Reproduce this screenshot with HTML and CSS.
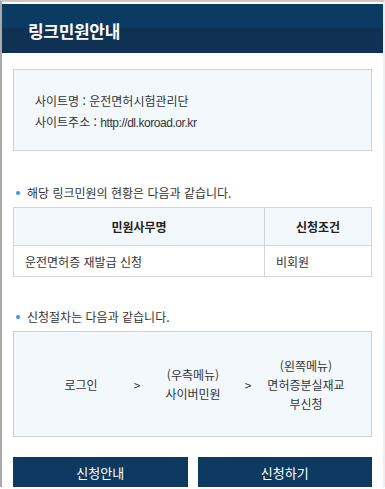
FILE: index.html
```html
<!DOCTYPE html>
<html lang="ko">

<head>
    <meta charset="UTF-8">
    <meta name="viewport" content="width=device-width, initial-scale=1.0">
    <title>링크민원안내</title>
    <link rel="stylesheet" href="styles.css">
</head>

<body>
    <div class="frame">
        <div class="header">
            <h1>링크민원안내</h1>
        </div>

        <div class="content">
            <div class="site-info">
                <p>사이트명 : 운전면허시험관리단</p>
                <p>사이트주소 : <span class="url">http://dl.koroad.or.kr</span></p>
            </div>

            <p class="bullet">해당 링크민원의 현황은 다음과 같습니다.</p>
            <table class="status">
                <thead>
                    <tr>
                        <th class="col-name">민원사무명</th>
                        <th>신청조건</th>
                    </tr>
                </thead>
                <tbody>
                    <tr>
                        <td>운전면허증 재발급 신청</td>
                        <td>비회원</td>
                    </tr>
                </tbody>
            </table>

            <p class="bullet second">신청절차는 다음과 같습니다.</p>
            <div class="steps">
                <div class="step">로그인</div>
                <div class="arrow">&gt;</div>
                <div class="step">(우측메뉴)<br>사이버민원</div>
                <div class="arrow">&gt;</div>
                <div class="step">(왼쪽메뉴)<br>면허증분실재교<br>부신청</div>
            </div>

            <div class="buttons">
                <button type="button" class="btn">신청안내</button>
                <button type="button" class="btn">신청하기</button>
            </div>
        </div>
    </div>
</body>

</html>
```

FILE: styles.css
```css
body {
    margin: 0;
    font-family: "Noto Sans CJK KR", "Noto Sans", sans-serif;
    font-size: 12px;
    color: #333;
    background: #fff;
}

.frame {
    height: 487px;
    border-top: 2px solid #c9c9c9;
    border-left: 2px solid #a9a9a9;
    border-right: 2px solid #efefef;
    padding-top: 2px;
    box-sizing: border-box;
}

.header {
    height: 49px;
    padding: 3px 0 0 26px;
    box-sizing: border-box;
    display: flex;
    align-items: center;
    background: linear-gradient(#0b3a63 0, #0b3a63 49%, #0e3154 49%, #0e3154 100%);
}

.header h1 {
    margin: 0;
    font-size: 17px;
    font-weight: bold;
    color: #fff;
    letter-spacing: -0.3px;
}

.content {
    padding: 0 11px;
}

.site-info {
    margin-top: 16px;
    padding: 20px 21px 16px;
    border: 1px solid #d2d2d2;
    background: #f3f8fc;
}

.site-info p {
    margin: 0;
    line-height: 21px;
}

.site-info .url {
    font-family: "Liberation Sans", sans-serif;
    letter-spacing: -0.45px;
}

.bullet {
    position: relative;
    margin: 33px 0 5px;
    padding-left: 14px;
    line-height: 18px;
}

.bullet::before {
    content: "";
    position: absolute;
    left: 3px;
    top: 7px;
    width: 4px;
    height: 4px;
    border-radius: 50%;
    background: #2a9bf0;
}

.bullet.second {
    margin-top: 31px;
}

.status {
    width: 100%;
    border-collapse: collapse;
}

.status th,
.status td {
    border: 1px solid #d4d4d4;
    padding: 0 11px;
}

.status th {
    height: 37px;
    background: #f3f8fc;
    color: #222;
    font-weight: bold;
    text-align: center;
}

.status td {
    height: 30px;
    text-align: left;
}

.status .col-name {
    width: 228px;
}

.steps {
    height: 106px;
    box-sizing: border-box;
    padding-left: 28px;
    border: 1px solid #d2d2d2;
    background: #f3f8fc;
    display: grid;
    grid-template-columns: 78px 34px 78px 32px 84px;
    align-items: center;
    text-align: center;
    line-height: 19px;
    white-space: nowrap;
}

.buttons {
    margin-top: 20px;
    display: grid;
    grid-template-columns: 1fr 1fr;
    gap: 10px;
}

.btn {
    height: 30px;
    border: 0;
    background: #0e3a62;
    color: #fff;
    font-family: inherit;
    font-size: 13px;
    padding: 0;
}
```
